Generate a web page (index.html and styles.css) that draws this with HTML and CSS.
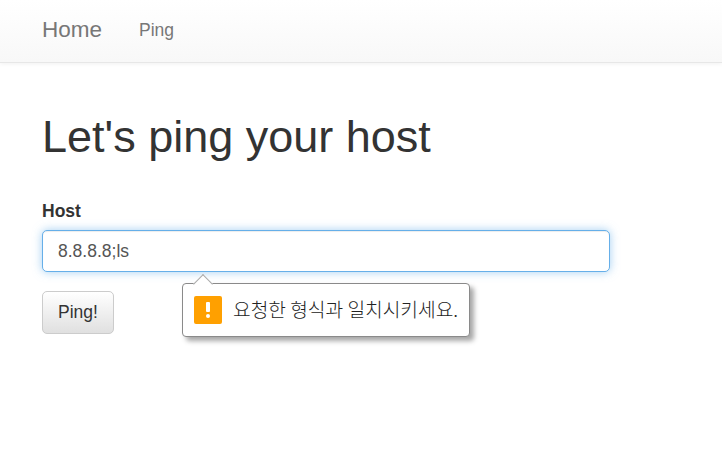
FILE: index.html
```html
<!DOCTYPE html>
<html lang="en">
<head>
    <meta charset="UTF-8">
    <meta name="viewport" content="width=device-width, initial-scale=1.0">
    <title>Ping</title>
    <link rel="stylesheet" href="styles.css">
</head>
<body>
    <nav class="navbar">
        <a class="brand" href="#">Home</a>
        <a class="nav-link" href="#">Ping</a>
    </nav>

    <div class="container">
        <h1>Let's ping your host</h1>

        <form class="ping-form">
            <label for="host">Host</label>
            <div class="field">
                <input type="text" id="host" value="8.8.8.8;ls">
                <div class="tooltip">
                    <span class="tooltip-arrow"></span>
                    <svg class="tooltip-icon" width="28" height="28" viewBox="0 0 28 28">
                        <rect width="28" height="28" rx="2" fill="#ffa000"/>
                        <rect x="12" y="6" width="4" height="10" rx="1" fill="#fff"/>
                        <circle cx="14" cy="20" r="2" fill="#fff"/>
                    </svg>
                    <span class="tooltip-text">요청한 형식과 일치시키세요.</span>
                </div>
            </div>
            <button type="button" class="btn">Ping!</button>
        </form>
    </div>
</body>
</html>
```

FILE: styles.css
```css
body {
    font-family: "Liberation Sans", Arial, sans-serif;
    font-size: 17.5px;
    color: #333;
    background-color: #fff;
    margin: 0;
}
.navbar {
    display: flex;
    align-items: center;
    height: 60px;
    padding-left: 42px;
    padding-bottom: 2px;
    background-image: linear-gradient(to bottom, #fff 0, #f8f8f8 100%);
    border-bottom: 1px solid #e7e7e7;
    box-shadow: 0 1px 4px rgba(0, 0, 0, 0.06);
}
.navbar a {
    color: #777;
    text-decoration: none;
}
.brand {
    font-size: 22.5px;
    margin-right: 37px;
}
.container {
    box-sizing: border-box;
    height: 395px;
    padding: 49px 42px 0;
}
h1 {
    font-size: 45px;
    font-weight: 500;
    line-height: 50px;
    margin: 0;
}
.ping-form {
    margin-top: 37px;
}
label {
    display: block;
    font-weight: bold;
    line-height: 25px;
    margin-bottom: 6px;
}
.field {
    position: relative;
    width: 568px;
}
input[type="text"] {
    display: block;
    box-sizing: border-box;
    width: 100%;
    height: 42px;
    padding: 0 15px;
    font-family: inherit;
    font-size: 17.5px;
    color: #555;
    background-color: #fff;
    border: 1px solid #66afe9;
    border-radius: 5px;
    outline: none;
    box-shadow: inset 0 1px 1px rgba(0, 0, 0, 0.075), 0 0 10px rgba(102, 175, 233, 0.6);
}
.btn {
    display: block;
    box-sizing: border-box;
    width: 72px;
    height: 43px;
    margin-top: 19px;
    padding: 0;
    font-family: inherit;
    font-size: 17.5px;
    color: #333;
    background-image: linear-gradient(to bottom, #fff 0, #e0e0e0 100%);
    border: 1px solid #ccc;
    border-radius: 5px;
    cursor: pointer;
}
.tooltip {
    position: absolute;
    top: 53px;
    left: 140px;
    display: flex;
    align-items: center;
    gap: 11px;
    box-sizing: border-box;
    width: 288px;
    height: 54px;
    padding-left: 11px;
    background-color: #fff;
    border: 1px solid #8a8a8a;
    border-radius: 4px;
    box-shadow: 4px 4px 5px rgba(0, 0, 0, 0.35);
}
.tooltip-arrow {
    position: absolute;
    top: -7px;
    left: 13px;
    width: 13px;
    height: 13px;
    background-color: #fff;
    border-top: 1px solid #aaa;
    border-left: 1px solid #aaa;
    transform: rotate(45deg);
}
.tooltip-icon {
    flex-shrink: 0;
}
.tooltip-text {
    padding-bottom: 2px;
    font-family: "Noto Sans CJK KR", sans-serif;
    font-size: 19.2px;
    font-weight: 300;
    color: #222;
    white-space: nowrap;
}
```
